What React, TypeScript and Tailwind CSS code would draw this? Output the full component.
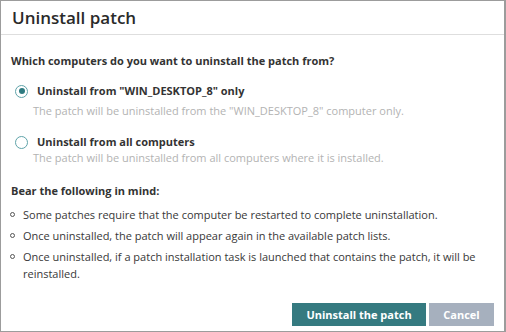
import React from "react";

function Radio({ checked }: { checked: boolean }) {
  return (
    <span className="flex h-[13px] w-[13px] shrink-0 items-center justify-center rounded-full border-[1.5px] border-[#5fa3a9] bg-white">
      {checked && <span className="h-[6px] w-[6px] rounded-full bg-[#2e7a80]" />}
    </span>
  );
}

function Bullet({ children }: { children: React.ReactNode }) {
  return (
    <li className="flex items-start">
      <span className="ml-[-1px] mt-[6px] h-[5px] w-[5px] shrink-0 rounded-full border border-[#555]" />
      <span className="pl-[8px]">{children}</span>
    </li>
  );
}

export default function App() {
  return (
    <div
      className="flex h-[332px] w-[506px] flex-col border border-r-2 border-[#9c9c9c] bg-white text-[#333]"
      style={{ fontFamily: '"Open Sans", sans-serif' }}
    >
      <div className="flex h-[34px] shrink-0 items-center border-b border-[#dedede] px-[11px]">
        <h1 className="text-[17px] font-semibold leading-none text-[#2a2a2a]">Uninstall patch</h1>
      </div>
      <div className="flex flex-1 flex-col pl-[10px] pr-[10px] pt-[18px]">
        <p className="text-[11px] font-bold leading-[16px]">
          Which computers do you want to uninstall the patch from?
        </p>
        <div className="mt-[14px] flex flex-col">
          <label className="flex h-[16px] items-center text-[11px] font-bold leading-[16px]">
            <span className="ml-[4px]"><Radio checked /></span>
            <span className="ml-[9px]">Uninstall from "WIN_DESKTOP_8" only</span>
          </label>
          <p className="mt-[4px] pl-[22px] text-[11px] leading-[16px] text-[#b3b3b3]">
            The patch will be uninstalled from the "WIN_DESKTOP_8" computer only.
          </p>
          <label className="mt-[15px] flex h-[16px] items-center text-[11px] font-bold leading-[16px]">
            <span className="ml-[4px]"><Radio checked={false} /></span>
            <span className="ml-[9px]">Uninstall from all computers</span>
          </label>
          <p className="pl-[22px] text-[11px] leading-[16px] text-[#b3b3b3]">
            The patch will be uninstalled from all computers where it is installed.
          </p>
        </div>
        <p className="mt-[17px] text-[11px] font-bold leading-[16px]">Bear the following in mind:</p>
        <ul className="mt-[7px] flex flex-col gap-[4px] text-[11px] leading-[17px] text-[#383838]">
          <Bullet>Some patches require that the computer be restarted to complete uninstallation.</Bullet>
          <Bullet>Once uninstalled, the patch will appear again in the available patch lists.</Bullet>
          <Bullet>
            Once uninstalled, if a patch installation task is launched that contains the patch, it will be
            reinstalled.
          </Bullet>
        </ul>
        <div className="mt-auto mb-[5px] flex justify-end gap-[3px]">
          <button className="h-[23px] w-[134px] bg-[#357a80] text-[11px] font-bold leading-none text-white">
            Uninstall the patch
          </button>
          <button className="h-[23px] w-[65px] bg-[#a6b0be] text-[11px] font-bold leading-none text-white">
            Cancel
          </button>
        </div>
      </div>
    </div>
  );
}
